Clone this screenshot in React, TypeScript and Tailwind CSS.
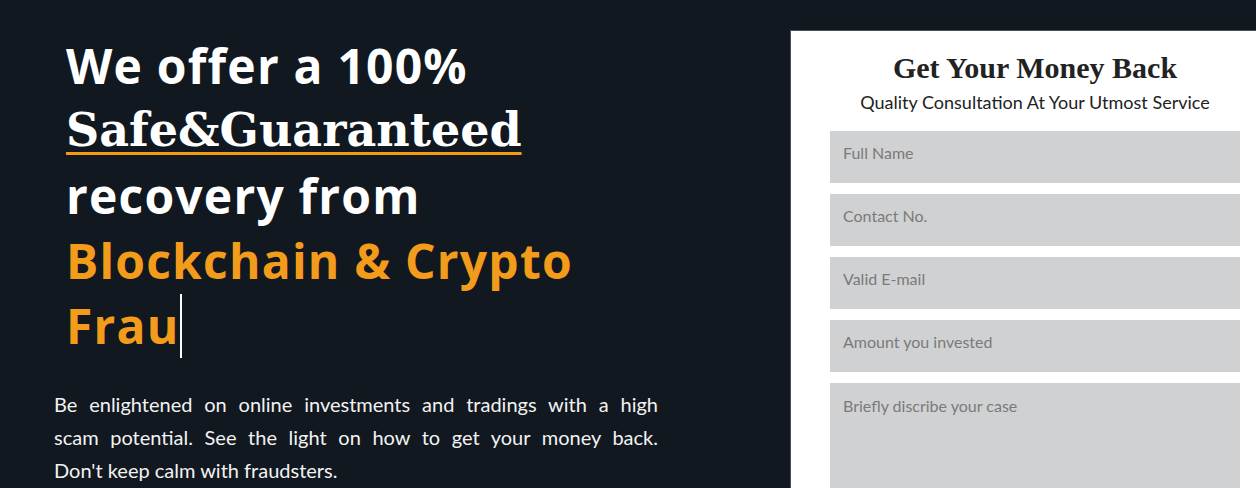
import React from "react";

const fields = ["Full Name", "Contact No.", "Valid E-mail", "Amount you invested"];

export default function App() {
  return (
    <div className="w-[1256px] h-[488px] overflow-hidden bg-[#111820] flex">
      <div className="w-[790px] shrink-0 flex flex-col">
        <h1
          className="pl-[66px] pt-[33px] text-[48px] leading-[65px] font-bold text-white tracking-[1.2px]"
          style={{ fontFamily: "'Open Sans', Lato, sans-serif" }}
        >
          <span className="block">We offer a 100%</span>
          <span
            className="block w-fit underline decoration-[#f39c12] decoration-[3px] underline-offset-[6px] text-[46px] tracking-normal"
            style={{ fontFamily: "'DejaVu Serif', 'Liberation Serif', serif" }}
          >
            Safe&amp;Guaranteed
          </span>
          <span className="block">recovery from</span>
          <span className="block text-[#f39c1b]">Blockchain &amp; Crypto</span>
          <span className="flex items-center text-[#f39c1b]">
            Frau
            <span className="inline-block w-[2px] h-[64px] bg-white ml-[1px]" />
          </span>
        </h1>
        <div
          className="ml-[54px] mt-[30px] w-[604px] text-[20px] leading-[33px] text-[#f2f2f2]"
          style={{ fontFamily: "Lato, 'Noto Sans', sans-serif" }}
        >
          <p className="text-justify [text-align-last:justify]">
            Be enlightened on online investments and tradings with a high
          </p>
          <p className="text-justify [text-align-last:justify]">
            scam potential. See the light on how to get your money back.
          </p>
          <p>Don't keep calm with fraudsters.</p>
        </div>
      </div>
      <div className="mt-[30px] flex-1 bg-white border-l border-t border-[#4a515a] pl-[39px] pr-[16px] flex flex-col">
        <h2
          className="mt-[18px] text-center text-[30px] leading-[38px] font-bold text-[#222]"
          style={{ fontFamily: "'Liberation Serif', serif" }}
        >
          Get Your Money Back
        </h2>
        <p
          className="mt-[2px] text-center text-[18px] leading-[26px] text-[#222]"
          style={{ fontFamily: "Lato, 'Open Sans', sans-serif" }}
        >
          Quality Consultation At Your Utmost Service
        </p>
        <div className="mt-[16px] flex flex-col gap-[11px]" style={{ fontFamily: "Lato, 'Noto Sans', sans-serif" }}>
          {fields.map((f) => (
            <div key={f} className="h-[52px] bg-[#d0d1d3] flex items-start pl-[13px] pt-[12px] text-[16px] leading-[20px] text-[#7a7a7a]">
              {f}
            </div>
          ))}
          <div className="h-[120px] bg-[#d0d1d3] pl-[13px] pt-[13px] text-[16px] leading-[20px] text-[#7a7a7a]">
            Briefly discribe your case
          </div>
        </div>
      </div>
    </div>
  );
}
